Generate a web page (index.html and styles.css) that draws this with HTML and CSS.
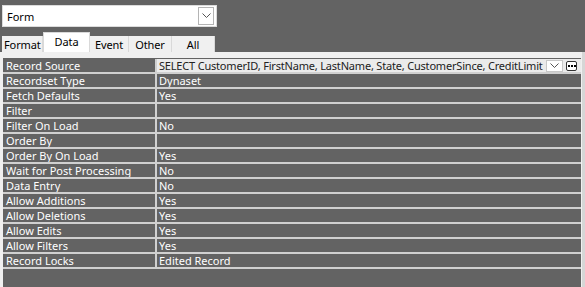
FILE: index.html
```html
<!DOCTYPE html>
<html>
<head>
<meta charset="utf-8">
<link rel="stylesheet" href="styles.css">
</head>
<body>
<div class="combo">
  <span class="combo-text">Form</span>
  <span class="combo-btn"><svg width="9" height="6" viewBox="0 0 9 6"><path d="M0.5 0.5 L4.5 4.5 L8.5 0.5" fill="none" stroke="#555" stroke-width="1"/></svg></span>
</div>
<div class="tabs">
  <div class="tab">Format</div>
  <div class="tab active">Data</div>
  <div class="tab">Event</div>
  <div class="tab">Other</div>
  <div class="tab all">All</div>
</div>
<div class="panel">
  <div class="sheet">
    <div class="row sel">
      <div class="lbl">Record Source</div>
      <div class="val edit">
        <span class="val-text">SELECT CustomerID, FirstName, LastName, State, CustomerSince, CreditLimit</span>
        <span class="drop"><svg width="9" height="6" viewBox="0 0 9 6"><path d="M0.5 0.5 L4.5 4.5 L8.5 0.5" fill="none" stroke="#555" stroke-width="1"/></svg></span>
        <span class="build"><i></i><i></i><i></i></span>
      </div>
    </div>
    <div class="row"><div class="lbl">Recordset Type</div><div class="val">Dynaset</div></div>
    <div class="row"><div class="lbl">Fetch Defaults</div><div class="val">Yes</div></div>
    <div class="row"><div class="lbl">Filter</div><div class="val"></div></div>
    <div class="row"><div class="lbl">Filter On Load</div><div class="val">No</div></div>
    <div class="row"><div class="lbl">Order By</div><div class="val"></div></div>
    <div class="row"><div class="lbl">Order By On Load</div><div class="val">Yes</div></div>
    <div class="row"><div class="lbl">Wait for Post Processing</div><div class="val">No</div></div>
    <div class="row"><div class="lbl">Data Entry</div><div class="val">No</div></div>
    <div class="row"><div class="lbl">Allow Additions</div><div class="val">Yes</div></div>
    <div class="row"><div class="lbl">Allow Deletions</div><div class="val">Yes</div></div>
    <div class="row"><div class="lbl">Allow Edits</div><div class="val">Yes</div></div>
    <div class="row"><div class="lbl">Allow Filters</div><div class="val">Yes</div></div>
    <div class="row"><div class="lbl">Record Locks</div><div class="val">Edited Record</div></div>
  </div>
</div>
</body>
</html>
```
FILE: styles.css
```css
html, body {
  margin: 0;
  padding: 0;
  height: 100%;
}
body {
  background: #636363;
  font-family: "Noto Sans", "Open Sans", sans-serif;
  font-size: 11px;
  display: flex;
  flex-direction: column;
  overflow: hidden;
}
.combo {
  margin: 5px 0 0 2px;
  width: 213px;
  height: 20px;
  background: #fff;
  border: 1px solid #dcdcdc;
  display: flex;
  align-items: center;
}
.combo-text {
  flex: 1;
  padding-left: 4px;
  color: #000;
}
.combo-btn {
  width: 14px;
  height: 16px;
  margin-right: 2px;
  border: 1px solid #b4b4b4;
  background: #fff;
  display: flex;
  align-items: center;
  justify-content: center;
}
.tabs {
  display: flex;
  align-items: flex-end;
  margin: 5px 0 0 2px;
  height: 20px;
}
.tab {
  height: 16px;
  line-height: 17px;
  background: #f0f0f0;
  border-right: 1px solid #d9d9d9;
  color: #000;
  text-align: center;
  box-sizing: border-box;
  white-space: nowrap;
  letter-spacing: -0.1px;
}
.tab:nth-child(1) { width: 41px; padding-left: 2px; text-align: left; }
.tab:nth-child(2) { width: 47px; }
.tab:nth-child(3) { width: 39px; }
.tab:nth-child(4) { width: 43px; }
.tab:nth-child(5) { width: 43px; }
.tab.active {
  height: 20px;
  line-height: 17px;
  background: #fff;
  border: 1px solid #d9d9d9;
  border-bottom: none;
}
.panel {
  flex: 1;
  background: #f0f0f0;
  padding: 6px 1px 0 3px;
  display: flex;
  flex-direction: column;
  border-right: 3px solid #d6d6d6;
}
.sheet {
  flex: 1;
  background: #636363;
  display: flex;
  flex-direction: column;
  padding-top: 1px;
}
.row {
  display: grid;
  grid-template-columns: 152px 1fr;
  column-gap: 2px;
  height: 13px;
  border-bottom: 2px solid #d0d0d0;
  background: #d0d0d0;
  color: #fff;
  line-height: 14px;
}
.lbl, .val {
  background: #636363;
  padding-left: 3px;
  white-space: nowrap;
  overflow: hidden;
}
.val { padding-left: 2px; }
.val.edit {
  background: #ebebeb;
  color: #222;
  display: flex;
  align-items: center;
  padding-right: 4px;
  letter-spacing: -0.19px;
}
.val-text { flex: 1; overflow: hidden; }
.drop {
  width: 17px;
  height: 12px;
  box-sizing: border-box;
  background: #fff;
  border: 1px solid #c8c8c8;
  display: flex;
  align-items: flex-end;
  justify-content: center;
  padding-bottom: 2px;
  margin-right: 3px;
  flex-shrink: 0;
}
.build {
  width: 11px;
  height: 10px;
  box-sizing: border-box;
  background: #fff;
  border: 1px solid #333;
  border-radius: 2px;
  display: flex;
  align-items: center;
  justify-content: center;
  gap: 1px;
  flex-shrink: 0;
}
.build i {
  width: 2px;
  height: 2px;
  background: #000;
}
```
